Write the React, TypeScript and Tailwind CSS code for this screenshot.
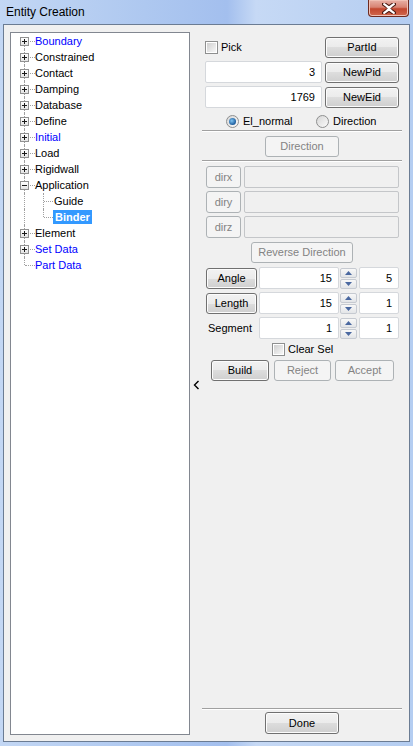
import React from "react";

const btn =
  "flex items-center justify-center rounded-[3px] border border-[#707070] bg-[linear-gradient(to_bottom,#f2f2f2_0%,#ebebeb_50%,#dddddd_50%,#cfcfcf_100%)] shadow-[inset_0_0_0_1px_#fcfcfc] text-black";
const btnOff =
  "flex items-center justify-center rounded-[3px] border border-[#adb2b5] bg-[#f4f4f4] text-[#838383]";
const field =
  "flex items-center justify-end rounded-[2px] border border-[#d5d8dc] bg-white pr-[6px] text-black";
const fieldOff = "rounded-[2px] border border-[#c4c6c9] bg-[#f0f0f0]";

type Node = { label: string; blue?: boolean; open?: boolean; leaf?: boolean };

const nodes: Node[] = [
  { label: "Boundary", blue: true },
  { label: "Constrained" },
  { label: "Contact" },
  { label: "Damping" },
  { label: "Database" },
  { label: "Define" },
  { label: "Initial", blue: true },
  { label: "Load" },
  { label: "Rigidwall" },
  { label: "Application", open: true },
];

const tail: Node[] = [
  { label: "Element" },
  { label: "Set Data", blue: true },
  { label: "Part Data", blue: true, leaf: true },
];

function Expander({ open }: { open?: boolean }) {
  return (
    <div className="absolute left-[9px] top-[4px] flex h-[9px] w-[9px] items-center justify-center border border-[#919191] bg-[linear-gradient(to_bottom,#ffffff,#e4e4e4)]">
      <div className="relative h-[5px] w-[5px]">
        <div className="absolute left-0 top-[2px] h-px w-[5px] bg-[#1a1a1a]" />
        {!open && <div className="absolute left-[2px] top-0 h-[5px] w-px bg-[#1a1a1a]" />}
      </div>
    </div>
  );
}

function TreeRow({ node, first }: { node: Node; first?: boolean }) {
  return (
    <div className="flex h-[16px] items-center">
      <div className="relative h-full w-[24px] shrink-0">
        <div
          className={
            first
              ? "absolute left-[13px] top-[8px] bottom-0 border-l border-dotted border-[#a0a0a0]"
              : node.leaf
              ? "absolute left-[13px] top-0 h-[8px] border-l border-dotted border-[#a0a0a0]"
              : "absolute left-[13px] top-0 bottom-0 border-l border-dotted border-[#a0a0a0]"
          }
        />
        <div
          className={
            node.leaf
              ? "absolute left-[14px] top-[8px] w-[10px] border-t border-dotted border-[#a0a0a0]"
              : "absolute left-[19px] top-[8px] w-[5px] border-t border-dotted border-[#a0a0a0]"
          }
        />
        {!node.leaf && <Expander open={node.open} />}
      </div>
      <span className={node.blue ? "text-[#0000ff]" : "text-black"}>{node.label}</span>
    </div>
  );
}

function ChildRow({ label, last, selected }: { label: string; last?: boolean; selected?: boolean }) {
  return (
    <div className="flex h-[16px] items-center">
      <div className="relative h-full w-[42px] shrink-0">
        <div className="absolute left-[13px] top-0 bottom-0 border-l border-dotted border-[#a0a0a0]" />
        <div
          className={
            last
              ? "absolute left-[32px] top-0 h-[8px] border-l border-dotted border-[#a0a0a0]"
              : "absolute left-[32px] top-0 bottom-0 border-l border-dotted border-[#a0a0a0]"
          }
        />
        <div className="absolute left-[33px] top-[8px] w-[9px] border-t border-dotted border-[#a0a0a0]" />
      </div>
      {selected ? (
        <span className="bg-[#3399ff] px-[2px] font-bold leading-[14px] text-white">{label}</span>
      ) : (
        <span className="px-px text-black">{label}</span>
      )}
    </div>
  );
}

function Check({ label }: { label: string }) {
  return (
    <div className="flex items-center gap-[3px]">
      <div className="flex h-[13px] w-[13px] items-center justify-center border border-[#8e8f8f] bg-white">
        <div className="h-[9px] w-[9px] bg-[linear-gradient(135deg,#cfcfcf,#f7f7f7)]" />
      </div>
      <span>{label}</span>
    </div>
  );
}

function Radio({ label, on }: { label: string; on?: boolean }) {
  return (
    <div className="flex items-center gap-[4px]">
      <div className="flex h-[13px] w-[13px] items-center justify-center rounded-full border border-[#8e8f8f] bg-[linear-gradient(135deg,#d6d6d6,#fbfbfb)]">
        {on && (
          <div className="h-[7px] w-[7px] rounded-full bg-[radial-gradient(circle_at_40%_40%,#7fc4f2,#1b5b9c_70%)]" />
        )}
      </div>
      <span>{label}</span>
    </div>
  );
}

function Spinner() {
  return (
    <div className="flex w-[17px] shrink-0 flex-col gap-px">
      {[0, 1].map((i) => (
        <div
          key={i}
          className="flex h-[10px] items-center justify-center rounded-[2px] border border-[#c6cad1] bg-[linear-gradient(to_bottom,#f8f8f8,#e3e5e8)]"
        >
          <svg width="7" height="4" viewBox="0 0 7 4">
            <path d={i === 0 ? "M0 4 L3.5 0 L7 4 Z" : "M0 0 L3.5 4 L7 0 Z"} fill="#4a68a0" />
          </svg>
        </div>
      ))}
    </div>
  );
}

function NumRow({ label, a, b, button }: { label: string; a: string; b: string; button?: boolean }) {
  return (
    <div className="flex h-[22px] items-center pl-[4px]">
      {button ? (
        <div className={`${btn} h-[21px] w-[51px]`}>{label}</div>
      ) : (
        <div className="w-[51px] pl-[2px]">{label}</div>
      )}
      <div className={`${field} ml-[2px] h-[22px] w-[80px]`}>{a}</div>
      <div className="ml-px">
        <Spinner />
      </div>
      <div className={`${field} ml-[2px] h-[22px] w-[40px]`}>{b}</div>
    </div>
  );
}

function Separator() {
  return <div className="h-[2px] border-t border-b border-t-[#a0a0a0] border-b-white" />;
}

export default function App() {
  return (
    <div className="flex h-[746px] w-[413px] flex-col bg-[linear-gradient(to_right,#c3d7f4_0%,#aec8f0_35%,#a3bfee_55%,#c6d9f5_62%,#b4cdf1_100%)] font-['Liberation_Sans',Arial,sans-serif] text-[11px] text-black">
      <div className="flex h-[24px] shrink-0 items-start justify-between">
        <span className="pl-[6px] pt-[5px] text-[12px] leading-[15px] text-black">Entity Creation</span>
        <div className="mr-[4px] flex h-[17px] w-[41px] items-center justify-center rounded-b-[4px] border border-t-0 border-[#6e2a1f] bg-[linear-gradient(to_bottom,#e8b1a6_0%,#d88373_45%,#c2472f_55%,#d0674d_100%)] shadow-[inset_0_0_0_1px_#f0c0b4]">
          <svg width="14" height="11" viewBox="0 0 14 11">
            <path
              d="M2 1 L7 4.5 L12 1 M2 10 L7 6.5 L12 10"
              stroke="#4a1a12"
              strokeWidth="4.2"
              fill="none"
              strokeLinecap="round"
            />
            <path
              d="M2.2 1.2 L7 4.7 L11.8 1.2 M2.2 9.8 L7 6.3 L11.8 9.8 M4.5 2.8 L9.5 8.2 M9.5 2.8 L4.5 8.2"
              stroke="#ffffff"
              strokeWidth="2.2"
              fill="none"
              strokeLinecap="round"
            />
          </svg>
        </div>
      </div>

      <div className="mx-[3px] mb-[4px] flex flex-1 border border-[#6b7c93] bg-[#f0f0f0] pl-[6px] pr-[7px]">
        <div className="mb-[6px] mt-[7px] w-[180px] shrink-0 border border-[#828790] bg-white">
          {nodes.map((n, i) => (
            <TreeRow key={n.label} node={n} first={i === 0} />
          ))}
          <ChildRow label="Guide" />
          <ChildRow label="Binder" last selected />
          {tail.map((n) => (
            <TreeRow key={n.label} node={n} />
          ))}
        </div>

        <div className="flex w-[12px] shrink-0 items-center justify-center pt-[4px]">
          <svg width="7" height="10" viewBox="0 0 7 10">
            <path d="M5.5 1 L1.5 5 L5.5 9" stroke="#000" strokeWidth="1.4" fill="none" />
          </svg>
        </div>

        <div className="flex w-[200px] shrink-0 flex-col pb-[7px]">
          <div className="mt-[11px] flex h-[22px] items-center justify-between pl-[3px] pr-[3px]">
            <Check label="Pick" />
            <div className={`${btn} h-[21px] w-[74px]`}>PartId</div>
          </div>
          <div className="mt-[3px] flex h-[22px] items-center gap-[3px] pl-[3px] pr-[3px]">
            <div className={`${field} h-[22px] w-[117px]`}>3</div>
            <div className={`${btn} h-[21px] w-[74px]`}>NewPid</div>
          </div>
          <div className="mt-[3px] flex h-[22px] items-center gap-[3px] pl-[3px] pr-[3px]">
            <div className={`${field} h-[22px] w-[117px]`}>1769</div>
            <div className={`${btn} h-[21px] w-[74px]`}>NewEid</div>
          </div>
          <div className="mt-[5px] flex h-[16px] items-center pl-[24px]">
            <div className="w-[90px]">
              <Radio label="El_normal" on />
            </div>
            <Radio label="Direction" />
          </div>
          <div className="mt-px">
            <Separator />
          </div>
          <div className="mt-[4px] flex justify-center">
            <div className={`${btnOff} h-[21px] w-[74px]`}>Direction</div>
          </div>
          <div className="mt-[3px]">
            <Separator />
          </div>
          {["dirx", "diry", "dirz"].map((d, i) => (
            <div
              key={d}
              className={`${i === 0 ? "mt-[4px]" : "mt-[3px]"} flex h-[22px] items-stretch gap-[3px] pl-[4px] pr-[3px]`}
            >
              <div className={`${btnOff} w-[35px]`}>{d}</div>
              <div className={`${fieldOff} w-[155px]`} />
            </div>
          ))}
          <div className="mt-[4px] flex justify-center">
            <div className={`${btnOff} h-[21px] w-[102px]`}>Reverse Direction</div>
          </div>
          <div className="mt-[4px]">
            <NumRow label="Angle" a="15" b="5" button />
          </div>
          <div className="mt-[3px]">
            <NumRow label="Length" a="15" b="1" button />
          </div>
          <div className="mt-[3px]">
            <NumRow label="Segment" a="1" b="1" />
          </div>
          <div className="mt-[3px] flex h-[15px] items-center pl-[70px]">
            <Check label="Clear Sel" />
          </div>
          <div className="mt-[3px] flex h-[21px] pl-[9px]">
            <div className={`${btn} w-[58px]`}>Build</div>
            <div className={`${btnOff} ml-[5px] w-[57px]`}>Reject</div>
            <div className={`${btnOff} ml-[4px] w-[59px]`}>Accept</div>
          </div>
          <div className="flex-1" />
          <Separator />
          <div className="mt-[2px] flex justify-center">
            <div className={`${btn} h-[22px] w-[74px]`}>Done</div>
          </div>
        </div>
      </div>
    </div>
  );
}
